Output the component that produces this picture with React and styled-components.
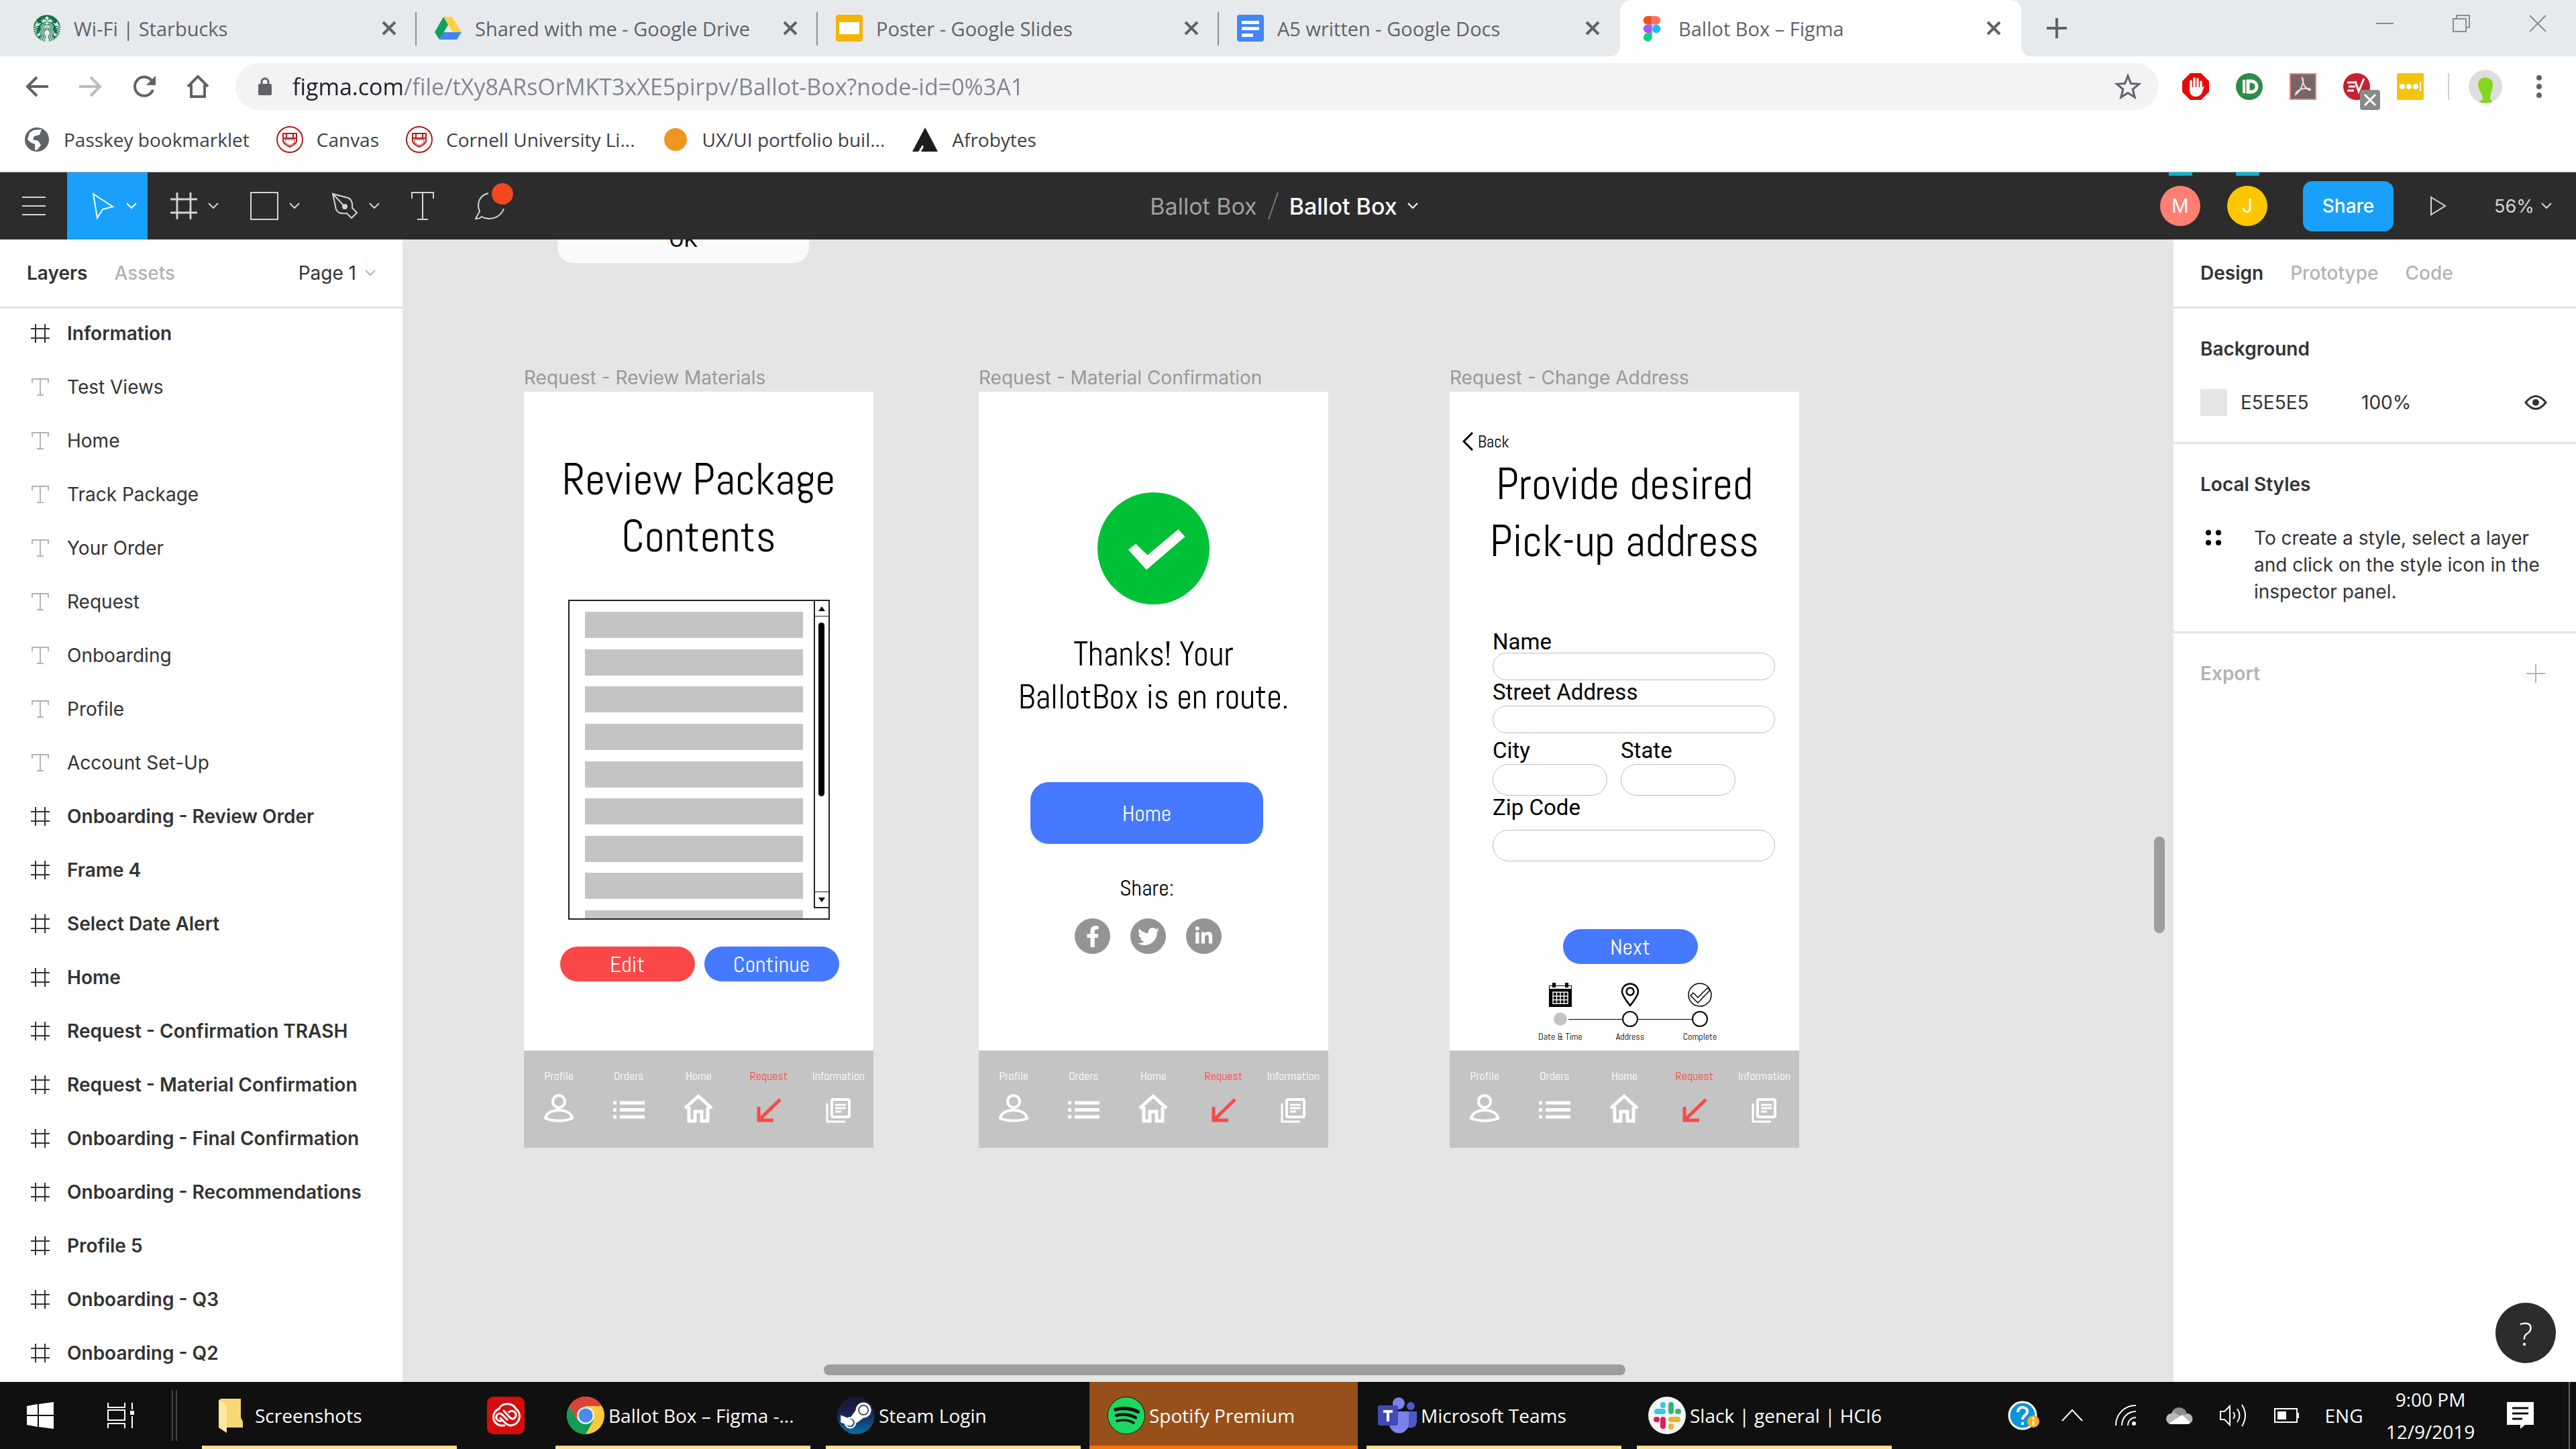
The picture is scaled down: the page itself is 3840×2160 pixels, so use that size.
import React from "react";
import styled, { createGlobalStyle, css } from "styled-components";
import { FaFacebookF, FaTwitter, FaLinkedinIn, FaSteamSymbol, FaSpotify } from "react-icons/fa";
import { SiStarbucks } from "react-icons/si";

const chromeFont = `"Segoe UI", "Open Sans", "Noto Sans", sans-serif`;
const figmaFont = `Inter, "Liberation Sans", sans-serif`;
const mockFont = `Abel, "Liberation Sans Narrow", Roboto, sans-serif`;

const GlobalStyle = createGlobalStyle`
  *, *::before, *::after { box-sizing: border-box; }
  body { margin: 0; font-family: ${figmaFont}; background: #fff; }
  button, input { font: inherit; color: inherit; border: 0; padding: 0; margin: 0; background: none; }
  button { cursor: pointer; }
  ul { list-style: none; margin: 0; padding: 0; }
  h1, h2, h3, p { margin: 0; font-weight: inherit; font-size: inherit; }
  a { color: inherit; text-decoration: none; }
  svg { display: block; flex: none; }
`;

const Page = styled.div`
  display: flex;
  flex-direction: column;
  height: 100vh;
  overflow: hidden;
`;

/* ---------- icons ---------- */

function Icon({ w = 40, h = w, box, children, color = "currentColor", sw = 3 }) {
  return (
    <svg width={w} height={h} viewBox={box || `0 0 ${w} ${h}`} fill="none" stroke={color} strokeWidth={sw} aria-hidden="true">
      {children}
    </svg>
  );
}

const Chevron = ({ color }) => (
  <Icon w={16} h={10} sw={2} color={color}><path d="M1 1l7 7 7-7" /></Icon>
);
const CloseIcon = () => (
  <Icon w={22} sw={4}><path d="M2 2l18 18M20 2L2 20" /></Icon>
);
const HashIcon = ({ size = 28, sw = 2 }) => (
  <Icon w={size} box="0 0 28 28" sw={sw}><path d="M7 0v28M21 0v28M0 7h28M0 21h28" /></Icon>
);
const TextIcon = ({ w = 26, sw = 2 }) => (
  <Icon w={w} box="0 0 26 26" sw={sw}><path d="M1 7V1h24v6M13 1v24M8 25h10" /></Icon>
);

const StarbucksIcon = () => <SiStarbucks size={40} color="#0c7548" />;
const DriveIcon = () => (
  <Icon w={40} sw={0}>
    <path d="M13 3h13l14 23H27z" fill="#ffcf40" />
    <path d="M13 3l7 12L7 37 0 26z" fill="#11a05d" />
    <path d="M13 26h27l-7 11H7z" fill="#4285f4" />
  </Icon>
);
const SlidesIcon = () => (
  <Icon w={40} sw={0}>
    <rect width="40" height="40" rx="4" fill="#f5b400" />
    <rect x="5" y="11" width="30" height="18" fill="#fff" />
  </Icon>
);
const DocsIcon = () => (
  <Icon w={40} sw={0}>
    <rect width="40" height="40" rx="4" fill="#4285f4" />
    <path d="M7 9h26v5H7zM7 18h26v5H7zM7 28h17v5H7z" fill="#fff" />
  </Icon>
);
const FigmaIcon = () => (
  <Icon w={40} sw={0}>
    <path d="M14 2a6 6 0 0 0 0 12.600h6.500V2z" fill="#f24e1e" />
    <path d="M20.500 2v12.600H27A6 6 0 0 0 27 2z" fill="#ff7262" />
    <path d="M14 14.600a6 6 0 0 0 0 12.600h6.500V14.600z" fill="#a259ff" />
    <circle cx="27" cy="20.900" r="6.300" fill="#1abcfe" />
    <path d="M14 27.200a6.300 6.300 0 1 0 6.500 6.300v-6.300z" fill="#0acf83" />
  </Icon>
);

const BackIcon = () => <Icon w={40} sw={4}><path d="M37 20H7M20 6L6 20l14 14" /></Icon>;
const ForwardIcon = () => <Icon w={40} sw={4}><path d="M3 20h30M20 6l14 14-14 14" /></Icon>;
const ReloadIcon = () => (
  <Icon w={40} sw={4}><path d="M33 25a14 14 0 1 1-3-15l4 4" /><path d="M37 4v14H23z" fill="currentColor" stroke="none" /></Icon>
);
const HomeIcon = () => <Icon w={40} sw={4}><path d="M5 20L20 5l15 15M10 17v18h20V17" /></Icon>;
const LockIcon = () => (
  <Icon w={20} h={28}><rect y="10" width="20" height="17" rx="2" fill="currentColor" stroke="none" /><path d="M5 11V7a5 5 0 0 1 10 0v4" /></Icon>
);
const StarIcon = () => (
  <Icon w={40} sw={3}><path d="M20 4l4.500 11.500 12 .8-9.300 7.700 3 12L20 29.500 9.800 36l3-12-9.300-7.700 12-.8z" /></Icon>
);
const BlockIcon = () => (
  <Icon w={40} sw={4} color="#fff">
    <path d="M12 0h16l12 12v16L28 40H12L0 28V12z" fill="#e60b0b" stroke="none" />
    <path d="M13 24V12M18 22V8M23 22V9M28 24V13" strokeLinecap="round" strokeWidth="3.500" />
    <path d="M11 21h19l3-2-4 11q-3 5-9 5-8 0-9-9z" fill="#fff" stroke="none" />
  </Icon>
);
const PushIcon = () => (
  <Icon w={40} sw={3} color="#fff">
    <circle cx="20" cy="20" r="20" fill="#2c8c45" stroke="none" />
    <path d="M12 10v20" strokeWidth="4" /><path d="M18 12h5a8 8 0 0 1 0 16h-5z" strokeWidth="5" />
  </Icon>
);
const AcrobatIcon = () => (
  <Icon w={40} color="#e8dcdc">
    <rect x="1" y="1" width="38" height="38" fill="#75666a" stroke="#ee8377" strokeWidth="2" />
    <path d="M19 7c4 5-2 19-10 25 0-6 14-12 22-8 2 4-11 0-12-17z" strokeWidth="2" />
  </Icon>
);
const EvIcon = () => (
  <Icon w={60} h={60} sw={3} color="#fff">
    <circle cx="20" cy="22" r="20" fill="#c8202f" stroke="none" />
    <path d="M6 16h12M8 22h10M6 28h10M18 14l5 15 8-19" />
    <rect x="25" y="27" width="30" height="30" rx="4" fill="#8a8a8a" stroke="none" />
    <path d="M32 34l16 16M48 34L32 50" />
  </Icon>
);
const DotsIcon = () => (
  <Icon w={40} sw={0}>
    <rect width="40" height="40" rx="3" fill="#f2c40e" />
    <circle cx="8" cy="20" r="4" fill="#fff" /><circle cx="18" cy="20" r="4" fill="#fff" /><circle cx="28" cy="20" r="4" fill="#fff" />
    <path d="M34 13h2v14h-2z" fill="#fff" />
  </Icon>
);
const ProfileIcon = () => (
  <Icon w={50} sw={0}>
    <circle cx="25" cy="25" r="25" fill="#dedede" />
    <path d="M14 22C14 8 36 8 36 22c0 9-4 13-4 20l3 6q-10 4-20 0l6-4c1-8-7-12-7-22z" fill="#84d61f" />
  </Icon>
);
const MoreIcon = () => (
  <Icon w={40} sw={0}><circle cx="20" cy="7" r="4" fill="currentColor" /><circle cx="20" cy="20" r="4" fill="currentColor" /><circle cx="20" cy="33" r="4" fill="currentColor" /></Icon>
);

const GlobeIcon = () => (
  <Icon w={40} sw={0}>
    <circle cx="20" cy="20" r="18" fill="#5f6368" />
    <path d="M15 6l12-1-3 8-8 2-2 5 8 2 4 6-5 7-4 1v-9l-7-3-4-4 3-10z" fill="#fff" />
  </Icon>
);
const CrestIcon = () => (
  <Icon w={40} color="#b31b1b" sw={2}>
    <circle cx="20" cy="20" r="19" /><path d="M10 11h20v12q-2 5-10 8-8-3-10-8zM10 18h20M15 11v7M25 11v7" />
    <path d="M13 20h14v5l-7 4-7-4z" strokeWidth="1" />
  </Icon>
);
const OrangeIcon = () => <Icon w={40} sw={0}><circle cx="20" cy="20" r="17" fill="#f0961e" /></Icon>;
const TriangleIcon = () => (
  <Icon w={40} sw={0}><path d="M20 2l19 36H1z" fill="#1d1d1b" /><path d="M10 38l6-10 2 3-4 7z" fill="#eee" /></Icon>
);

/* ---------- browser chrome ---------- */

const TabStrip = styled.div`
  display: flex;
  align-items: stretch;
  height: 84px;
  flex: none;
  padding-left: 23px;
  background: #e7eaed;
  color: #5f6368;
  font: 29px ${chromeFont};
`;
const Tab = styled.div`
  position: relative;
  display: flex;
  align-items: center;
  gap: 20px;
  flex: 0 1 598px;
  min-width: 0;
  padding: 0 30px 0 27px;
  a { flex: 1; display: flex; align-items: center; gap: 20px; white-space: nowrap; overflow: hidden; }
  &::after {
    content: "";
    position: absolute;
    right: 0;
    top: 18px;
    height: 50px;
    width: 2px;
    background: ${(p) => (p.$divider ? "#8c9094" : "transparent")};
  }
  ${(p) => p.$active && css`
    background: #fff;
    border-radius: 16px 16px 0 0;
    &::before, &::after {
      content: "";
      position: absolute;
      top: auto;
      bottom: 0;
      width: 16px;
      height: 16px;
    }
    &::before { left: -16px; background: radial-gradient(circle at 0 0, transparent 16px, #fff 17px); }
    &::after { right: -16px; background: radial-gradient(circle at 100% 0, transparent 16px, #fff 17px); }
  `}
`;
const NewTab = styled.button`
  width: 70px;
  margin-left: 18px;
  display: grid;
  place-items: center;
`;
const WindowControls = styled.div`
  display: flex;
  margin-left: auto;
  height: 70px;
  color: #8a8d90;
  button { width: 114px; display: grid; place-items: center; }
`;
const ToolRow = styled.div`
  display: flex;
  align-items: center;
  flex: none;
  height: 90px;
  padding: 0 35px;
  background: #fff;
  color: #5f6368;
`;
const NavButtons = styled.div`
  display: flex;
  gap: 40px;
  button:nth-child(2) { color: #babcbe; }
`;
const AddressBar = styled.form`
  flex: 1;
  display: flex;
  align-items: center;
  gap: 31px;
  height: 70px;
  margin: 0 35px 0 36px;
  padding: 0 26px 0 34px;
  border-radius: 35px;
  background: #f1f3f4;
`;
const Url = styled.input`
  flex: 1;
  height: 60px;
  outline: 0;
  font: 34px ${chromeFont};
  color: transparent;
  background: linear-gradient(90deg, #202124 163px, #80868b 163px);
  background-clip: text;
`;
const Extensions = styled.div`
  display: flex;
  align-items: center;
  gap: 40px;
  button { width: 40px; height: 40px; display: grid; align-items: start; overflow: visible; }
  button:nth-child(4) svg { margin-top: -2px; }
`;
const ToolDivider = styled.span`
  width: 2px;
  height: 40px;
  margin: 0 29px 0 36px;
  background: #d0d2d4;
`;
const MoreButton = styled.button`margin-left: 35px;`;
const Bookmarks = styled.nav`
  display: flex;
  align-items: center;
  gap: 40px;
  flex: none;
  height: 83px;
  padding: 0 35px 14px;
  border-bottom: 1px solid #b0b0b0;
  background: #fff;
  color: #3c4043;
  font: 28px ${chromeFont};
  a { display: flex; align-items: center; gap: 20px; }
`;

const tabs = [
  { title: "Wi-Fi | Starbucks", icon: StarbucksIcon, divider: true },
  { title: "Shared with me - Google Drive", icon: DriveIcon, divider: true },
  { title: "Poster - Google Slides", icon: SlidesIcon, divider: true },
  { title: "A5 written - Google Docs", icon: DocsIcon },
  { title: "Ballot Box – Figma", icon: FigmaIcon, active: true },
];
const bookmarks = [
  ["Passkey bookmarklet", GlobeIcon],
  ["Canvas", CrestIcon],
  ["Cornell University Li...", CrestIcon],
  ["UX/UI portfolio buil...", OrangeIcon],
  ["Afrobytes", TriangleIcon],
];
const extensions = [["Ad blocker", BlockIcon], ["Push", PushIcon], ["Acrobat", AcrobatIcon], ["EV", EvIcon], ["Passwords", DotsIcon]];

function Browser() {
  return (
    <>
      <TabStrip>
        {tabs.map(({ title, icon: TabIcon, divider, active }) => (
          <Tab key={title} $divider={divider} $active={active}>
            <a href="#tab"><TabIcon />{title}</a>
            <button aria-label={`Close ${title}`}><CloseIcon /></button>
          </Tab>
        ))}
        <NewTab aria-label="New tab"><Icon w={30} sw={4}><path d="M15 0v30M0 15h30" /></Icon></NewTab>
        <WindowControls>
          <button aria-label="Minimize"><Icon w={26} sw={2}><path d="M0 13h26" /></Icon></button>
          <button aria-label="Restore"><Icon w={26} sw={2}><path d="M1 6h19v19H1zM6 6V1h19v18h-5" /></Icon></button>
          <button aria-label="Close window"><Icon w={26} sw={2}><path d="M1 1l24 24M25 1L1 25" /></Icon></button>
        </WindowControls>
      </TabStrip>
      <ToolRow>
        <NavButtons>
          <button aria-label="Back"><BackIcon /></button>
          <button aria-label="Forward"><ForwardIcon /></button>
          <button aria-label="Reload"><ReloadIcon /></button>
          <button aria-label="Home"><HomeIcon /></button>
        </NavButtons>
        <AddressBar>
          <LockIcon />
          <Url aria-label="Address" defaultValue="figma.com/file/tXy8ARsOrMKT3xXE5pirpv/Ballot-Box?node-id=0%3A1" />
          <button type="button" aria-label="Bookmark this page"><StarIcon /></button>
        </AddressBar>
        <Extensions>
          {extensions.map(([name, ExtIcon]) => <button key={name} aria-label={name}><ExtIcon /></button>)}
        </Extensions>
        <ToolDivider />
        <button aria-label="Profile"><ProfileIcon /></button>
        <MoreButton aria-label="More"><MoreIcon /></MoreButton>
      </ToolRow>
      <Bookmarks>
        {bookmarks.map(([name, MarkIcon]) => <a key={name} href="#bookmark"><MarkIcon />{name}</a>)}
      </Bookmarks>
    </>
  );
}

/* ---------- figma toolbar ---------- */

const FigmaBar = styled.header`
  display: grid;
  grid-template-columns: 1fr auto 1fr;
  flex: none;
  height: 100px;
  background: #2c2c2c;
  color: #d5d5d5;
`;
const Tools = styled.div`display: flex;`;
const Tool = styled.button`
  position: relative;
  width: ${(p) => (p.$single ? 100 : 120)}px;
  padding-left: ${(p) => (p.$single ? 0 : 20)}px;
  display: flex;
  align-items: center;
  justify-content: center;
  gap: 16px;
  background: ${(p) => (p.$active ? "#18a0fb" : "none")};
  color: ${(p) => (p.$active ? "#fff" : "inherit")};
`;
const Notice = styled.span`
  position: absolute;
  left: 53px;
  top: 16px;
  width: 32px;
  height: 32px;
  border-radius: 50%;
  background: #f24822;
`;
const FileTitle = styled.div`
  display: flex;
  align-items: center;
  gap: 16px;
  padding-right: 12px;
  font-size: 34px;
  a { color: #a0a0a0; }
  button { display: flex; align-items: center; gap: 15px; color: #fff; font-weight: 500; }
`;
const Session = styled.div`
  display: flex;
  align-items: center;
  justify-content: flex-end;
  padding-right: 36px;
  font-size: 28px;
`;
const Avatar = styled.button`
  position: relative;
  width: 60px;
  height: 60px;
  margin-right: 40px;
  border-radius: 50%;
  background: ${(p) => p.$color};
  color: #fff;
  &::before {
    content: "";
    position: absolute;
    left: 13px;
    top: -20px;
    width: 35px;
    height: 5px;
    background: #00b5ce;
  }
`;
const ShareButton = styled.button`
  width: 135px;
  height: 75px;
  margin: 0 54px 0 13px;
  border-radius: 14px;
  background: #18a0fb;
  color: #fff;
  font-weight: 500;
`;
const Zoom = styled.button`
  display: flex;
  align-items: center;
  justify-content: space-between;
  width: 86px;
  margin-left: 71px;
  font-size: 27px;
`;

function FigmaToolbar() {
  return (
    <FigmaBar>
      <Tools>
        <Tool $single aria-label="Menu"><Icon w={35} h={28} sw={2}><path d="M0 1h35M0 14h35M0 27h35" /></Icon></Tool>
        <Tool $active aria-label="Move"><Icon w={36} h={40} sw={2}><path d="M3 2l29 19-15 4-8 13z" /></Icon><Chevron /></Tool>
        <Tool aria-label="Frame"><HashIcon size={40} sw={2} /><Chevron /></Tool>
        <Tool aria-label="Rectangle"><Icon w={42} h={42} sw={2}><rect x="1" y="1" width="40" height="40" /></Icon><Chevron /></Tool>
        <Tool aria-label="Pen">
          <Icon w={40} sw={2}>
            <path d="M2 2l5 23c2 5 6 7 16 6l7 7 8-8-7-7c1-9-1-13-6-15z" /><path d="M3 3l16 17" /><circle cx="20" cy="21" r="3" fill="currentColor" />
          </Icon>
          <Chevron />
        </Tool>
        <Tool $single aria-label="Text"><Icon w={34} h={42} sw={2}><path d="M1 10V1h32v9M17 1v40M9 41h16" /></Icon></Tool>
        <Tool $single aria-label="Comments">
          <Icon w={46} h={40} sw={2}><path d="M21 1C8 4 3 16 8 28L2 39q7 0 9-3c10 6 28 3 33-12" /></Icon>
          <Notice />
        </Tool>
      </Tools>
      <FileTitle>
        <a href="#project">Ballot Box</a>
        <Icon w={16} h={40} sw={2} color="#777"><path d="M15 0L1 40" /></Icon>
        <button>Ballot Box<Chevron /></button>
      </FileTitle>
      <Session>
        <Avatar $color="#ff7f73">M</Avatar>
        <Avatar $color="#ffc700">J</Avatar>
        <ShareButton>Share</ShareButton>
        <button aria-label="Present"><Icon w={25} h={30} sw={2}><path d="M2 2l21 13L2 28z" /></Icon></button>
        <Zoom>56%<Chevron /></Zoom>
      </Session>
    </FigmaBar>
  );
}

/* ---------- side panels ---------- */

const Workspace = styled.main`
  flex: 1;
  min-height: 0;
  display: grid;
  grid-template-columns: 600px minmax(0, 1fr) 600px;
  font-size: 28px;
  color: #333;
`;
const Panel = styled.aside`
  position: relative;
  min-height: 0;
  overflow: hidden;
  background: #fff;
`;
const PanelTabs = styled.div`
  position: relative;
  display: flex;
  align-items: center;
  gap: 40px;
  height: 100px;
  padding: 0 40px;
  box-shadow: 0 3px 0 #e5e5e5;
`;
const PanelTab = styled.button`
  font-weight: ${(p) => (p.$active ? 600 : 500)};
  color: ${(p) => (p.$active ? "#333" : "#b3b3b3")};
`;
const PageButton = styled.button`
  display: flex;
  align-items: center;
  gap: 13px;
  margin-left: auto;
`;
const LayerRow = styled.button`
  display: flex;
  align-items: center;
  gap: 26px;
  width: 100%;
  height: 80px;
  padding-left: 46px;
  font-weight: ${(p) => (p.$frame ? 600 : 400)};
  color: #333;
  svg { width: 28px; color: ${(p) => (p.$frame ? "#333" : "#b3b3b3")}; }
`;
const Section = styled.section`
  padding: 20px 40px 19px;
  border-bottom: ${(p) => (p.$last ? "0" : "3px solid #e5e5e5")};
  margin-top: ${(p) => (p.$first ? "3px" : "0")};
`;
const SectionTitle = styled.h2`
  display: flex;
  align-items: center;
  justify-content: space-between;
  height: 80px;
  font-weight: 600;
  color: ${(p) => (p.$muted ? "#b3b3b3" : "#333")};
`;
const FillRow = styled.div`
  display: flex;
  align-items: center;
  height: 80px;
  input { width: 180px; }
  button { margin: 0 2px 0 auto; }
`;
const Swatch = styled.span`
  width: 40px;
  height: 40px;
  margin-right: 20px;
  border-radius: 2px;
  background: #e5e5e5;
`;
const StyleHint = styled.div`
  display: flex;
  gap: 48px;
  padding: 20px 0 20px 8px;
  p { line-height: 40px; }
  svg { margin-top: 8px; }
`;
const HelpButton = styled.button`
  position: absolute;
  right: 30px;
  bottom: 28px;
  width: 90px;
  height: 90px;
  border-radius: 50%;
  background: #2c2c2c;
  color: #fff;
  font: 300 48px ${chromeFont};
`;

const layers = [
  ["Information", true], ["Test Views"], ["Home"], ["Track Package"], ["Your Order"], ["Request"], ["Onboarding"],
  ["Profile"], ["Account Set-Up"], ["Onboarding - Review Order", true], ["Frame 4", true], ["Select Date Alert", true],
  ["Home", true], ["Request - Confirmation TRASH", true], ["Request - Material Confirmation", true],
  ["Onboarding - Final Confirmation", true], ["Onboarding - Recommendations", true], ["Profile 5", true],
  ["Onboarding - Q3", true], ["Onboarding - Q2", true],
];

function LayersPanel() {
  return (
    <Panel>
      <PanelTabs>
        <PanelTab $active>Layers</PanelTab>
        <PanelTab>Assets</PanelTab>
        <PageButton>Page 1<Chevron color="#b3b3b3" /></PageButton>
      </PanelTabs>
      <ul>
        {layers.map(([name, frame], i) => (
          <li key={i}><LayerRow $frame={frame}>{frame ? <HashIcon /> : <TextIcon />}{name}</LayerRow></li>
        ))}
      </ul>
    </Panel>
  );
}

function DesignPanel() {
  return (
    <Panel>
      <PanelTabs>
        <PanelTab $active>Design</PanelTab>
        <PanelTab>Prototype</PanelTab>
        <PanelTab>Code</PanelTab>
      </PanelTabs>
      <Section $first>
        <SectionTitle>Background</SectionTitle>
        <FillRow>
          <Swatch />
          <input aria-label="Fill colour" defaultValue="E5E5E5" />
          <input aria-label="Opacity" defaultValue="100%" />
          <button aria-label="Toggle visibility">
            <Icon w={36} h={24}><path d="M3 12q15-19 30 0-15 19-30 0z" sw={2} /><circle cx="18" cy="12" r="5" fill="currentColor" stroke="none" /></Icon>
          </button>
        </FillRow>
      </Section>
      <Section>
        <SectionTitle>Local Styles</SectionTitle>
        <StyleHint>
          <Icon w={24} sw={0}>
            {[4, 19].flatMap((x) => [4, 19].map((y) => <circle key={`${x}-${y}`} cx={x} cy={y} r="4" fill="#000" />))}
          </Icon>
          <p>To create a style, select a layer and click on the style icon in the inspector panel.</p>
        </StyleHint>
      </Section>
      <Section $last>
        <SectionTitle $muted>
          Export
          <button aria-label="Add export"><Icon w={40} sw={2}><path d="M20 6v28M6 20h28" /></Icon></button>
        </SectionTitle>
      </Section>
      <HelpButton aria-label="Help">?</HelpButton>
    </Panel>
  );
}

/* ---------- canvas ---------- */

const Canvas = styled.div`
  position: relative;
  overflow: hidden;
  background: #e5e5e5;
`;
const AlertCard = styled.div`
  position: absolute;
  left: 231px;
  top: -65px;
  width: 375px;
  height: 100px;
  border-radius: 24px;
  background: #fafafa;
  color: #000;
  text-align: center;
  font: 32px/130px Roboto, sans-serif;
`;
const Placed = styled.section`
  position: absolute;
  left: ${(p) => p.$x}px;
  top: 190px;
  width: 521px;
`;
const FrameName = styled.h3`
  height: 37px;
  line-height: 32px;
  font-size: 28px;
  color: #999;
  white-space: nowrap;
`;
const Artboard = styled.div`
  display: flex;
  flex-direction: column;
  align-items: center;
  height: 1127px;
  background: #fff;
  color: #000;
  font-family: ${mockFont};
`;
const MockTitle = styled.h2`
  margin-top: ${(p) => p.$top}px;
  font-size: ${(p) => p.$size || 66}px;
  line-height: ${(p) => p.$line || 85}px;
  text-align: center;
  white-space: pre-line;
`;
const Pill = styled.button`
  width: ${(p) => (p.$large ? 347 : 201)}px;
  height: ${(p) => (p.$large ? 92 : 52)}px;
  border-radius: 27px;
  background: ${(p) => (p.$danger ? "#fa4848" : "#4579ff")};
  color: #fff;
  font-size: 34px;
`;
const ScrollBox = styled.div`
  display: flex;
  justify-content: space-between;
  align-items: flex-start;
  width: 390px;
  height: 477px;
  margin: 52px 0 40px;
  padding-left: 23px;
  border: 2px solid #222;
  overflow: hidden;
`;
const Items = styled.ul`
  display: flex;
  flex-direction: column;
  justify-content: space-between;
  width: 325px;
  height: 484px;
  flex: none;
  margin-top: 16px;
  li { height: 39px; background: #c4c4c4; }
`;
const ScrollTrack = styled.div`
  display: flex;
  flex-direction: column;
  align-items: center;
  width: 22px;
  height: 458px;
  border: solid #222;
  border-width: 0 0 2px 2px;
  button { width: 100%; height: 23px; display: grid; place-items: center; }
  button:first-child { border-bottom: 1px solid #222; }
  button:last-child { border-top: 1px solid #222; margin-top: auto; }
`;
const Thumb = styled.span`
  width: 9px;
  height: 259px;
  margin-top: 9px;
  border-radius: 5px;
  background: #000;
`;
const PillRow = styled.div`display: flex; gap: 14px; padding-left: 2px;`;
const MockNav = styled.nav`
  display: grid;
  grid-template-columns: repeat(5, 1fr);
  width: 100%;
  height: 145px;
  margin-top: auto;
  background: #c4c4c4;
`;
const MockNavItem = styled.button`
  display: flex;
  flex-direction: column;
  align-items: center;
  gap: 16px;
  padding-top: 28px;
  min-width: 0;
  font-size: 18px;
  line-height: 20px;
  white-space: nowrap;
  color: ${(p) => (p.$active ? "#fa4848" : "#fff")};
`;

const navItems = [
  ["Profile", <><circle cx="24" cy="12" r="9" /><path d="M4 37c2-16 38-16 40 0-12 5-28 5-40 0z" /></>],
  ["Orders", <path key="o" d="M1 14h5M11 14h37M1 24.500h5M11 24.500h37M1 35h5M11 35h37" strokeWidth="5" />],
  ["Home", <path key="h" d="M4 22L24 4l20 18M10 20v21h9V27h10v14h9V20" strokeWidth="5" />],
  ["Request", <path key="r" d="M41 9L10 39M9 20v20h22" strokeWidth="5" />, true],
  ["Information", <><rect x="14" y="9" width="26" height="26" rx="2" /><path d="M7 15v27h27M19 17h16M19 22h16M19 27h9" strokeWidth="3" /></>],
];

function BottomNav() {
  return (
    <MockNav>
      {navItems.map(([name, drawing, active]) => (
        <MockNavItem key={name} $active={active}>
          {name}
          <Icon w={48} h={44} sw={4}>{drawing}</Icon>
        </MockNavItem>
      ))}
    </MockNav>
  );
}

const ShareBlock = styled.div`
  display: flex;
  flex-direction: column;
  align-items: center;
  padding-right: 20px;
  margin-top: 95px;
  font-size: 34px;
  p { margin: 46px 0 25px; line-height: 40px; }
`;
const Socials = styled.div`
  display: flex;
  gap: 30px;
  margin-left: 4px;
  a { width: 53px; height: 53px; border-radius: 50%; display: grid; place-items: center; background: #949494; color: #fff; }
`;
const BackLink = styled.button`
  display: flex;
  align-items: center;
  align-self: flex-start;
  gap: 7px;
  height: 28px;
  margin: 60px 0 0 19px;
  font-size: 25px;
`;
const AddressForm = styled.form`
  display: grid;
  grid-template-columns: 171px 171px;
  column-gap: 20px;
  width: 421px;
  margin: 92px 0 101px 28px;
  font: 33px/32px Roboto, sans-serif;
`;
const Field = styled.label`
  display: flex;
  flex-direction: column;
  grid-column: ${(p) => (p.$half ? "auto" : "1 / -1")};
  gap: ${(p) => p.$gap || 0}px;
  padding-top: ${(p) => p.$top || 0}px;
  width: ${(p) => (p.$half ? "171px" : "421px")};
  input {
    width: 100%;
    height: ${(p) => (p.$tall ? 47 : 41)}px;
    padding: 0 20px;
    border: 1px solid #bdbdbd;
    border-radius: 24px;
  }
`;
const Steps = styled.div`
  display: flex;
  flex-direction: column;
  align-items: center;
  padding-left: 17px;
`;
const StepRow = styled.div`
  display: grid;
  grid-template-columns: repeat(3, 104px);
  justify-items: center;
  margin-top: ${(p) => p.$top}px;
  font-size: 14px;
  line-height: 16px;
`;
const StepTrack = styled.div`
  display: flex;
  align-items: center;
  height: 26px;
  margin-top: 5px;
`;
const Dot = styled.span`
  width: 24px;
  height: 24px;
  border-radius: 50%;
  border: 2px solid ${(p) => (p.$done ? "#fff" : "#000")};
  background: ${(p) => (p.$done ? "#c4c4c4" : "#fff")};
  background-clip: padding-box;
`;
const Line = styled.span`width: 80px; height: 1px; background: #000;`;
const HorizontalBar = styled.div`
  position: absolute;
  left: 628px;
  right: 817px;
  bottom: 10px;
  height: 16px;
  border-radius: 8px;
  background: #9d9d9d;
`;
const VerticalBar = styled.div`
  position: absolute;
  right: 13px;
  top: 890px;
  width: 16px;
  height: 144px;
  border-radius: 8px;
  background: #9d9d9d;
`;

function CanvasArea() {
  return (
    <Canvas>
      <AlertCard>OK</AlertCard>

      <Placed $x={181}>
        <FrameName>Request - Review Materials</FrameName>
        <Artboard>
          <MockTitle $top={88}>{"Review Package\nContents"}</MockTitle>
          <ScrollBox>
            <Items>{Array.from({ length: 9 }, (_, i) => <li key={i} />)}</Items>
            <ScrollTrack>
              <button aria-label="Scroll up"><Icon w={10} h={7} sw={0}><path d="M0 7l5-7 5 7z" fill="#000" /></Icon></button>
              <Thumb />
              <button aria-label="Scroll down"><Icon w={10} h={7} sw={0}><path d="M0 0l5 7 5-7z" fill="#000" /></Icon></button>
            </ScrollTrack>
          </ScrollBox>
          <PillRow><Pill $danger>Edit</Pill><Pill>Continue</Pill></PillRow>
          <BottomNav />
        </Artboard>
      </Placed>

      <Placed $x={859}>
        <FrameName>Request - Material Confirmation</FrameName>
        <Artboard>
          <MockTitle as="div" $top={150}>
            <Icon w={167} sw={0}>
              <circle cx="83.500" cy="83.500" r="83.500" fill="#00c136" />
              <path d="M46 85.500l11-9 17.500 17 46-38.500 10 11L73 115.500z" fill="#fff9f9" />
            </Icon>
          </MockTitle>
          <MockTitle $top={42} $size={50} $line={64}>{"Thanks! Your\nBallotBox is en route."}</MockTitle>
          <ShareBlock>
            <Pill $large>Home</Pill>
            <p>Share:</p>
            <Socials>
              <a href="#facebook" aria-label="Facebook"><FaFacebookF size={32} /></a>
              <a href="#twitter" aria-label="Twitter"><FaTwitter size={32} /></a>
              <a href="#linkedin" aria-label="LinkedIn"><FaLinkedinIn size={29} /></a>
            </Socials>
          </ShareBlock>
          <BottomNav />
        </Artboard>
      </Placed>

      <Placed $x={1561}>
        <FrameName>Request - Change Address</FrameName>
        <Artboard>
          <BackLink><Icon w={16} h={28} sw={3}><path d="M15 1L2 14l13 13" /></Icon>Back</BackLink>
          <MockTitle $top={7}>{"Provide desired\nPick-up address"}</MockTitle>
          <AddressForm>
            <Field>Name<input /></Field>
            <Field $top={2} $gap={4}>Street Address<input /></Field>
            <Field $half $tall $top={10} $gap={4}>City<input /></Field>
            <Field $half $tall $top={10} $gap={4}>State<input /></Field>
            <Field $tall $top={2} $gap={17}>Zip Code<input /></Field>
          </AddressForm>
          <Steps>
            <Pill>Next</Pill>
            <StepRow $top={28}>
              <Icon w={36} sw={0}>
                <path d="M1 4h34v32H1z" fill="#000" /><path d="M2 5h32v4H2z" fill="#fff" />
                <path d="M6 0h5v7H6zM25 0h5v7h-5z" fill="#000" />
                <path d="M7 14h22v17H7zM7 20h22M7 25.500h22M12.500 14v17M18 14v17M23.500 14v17" stroke="#fff" strokeWidth="1.500" />
              </Icon>
              <Icon w={28} h={36} sw={2.500}><path d="M14 34C6 24 2 18 2 13a12 11.500 0 0 1 24 0c0 5-4 11-12 21z" /><circle cx="14" cy="13" r="5.500" /></Icon>
              <Icon w={36} sw={1.500}><circle cx="18" cy="18" r="17" /><path d="M4 19l4-4 7 7L29 8l4 3-18 19z" /></Icon>
            </StepRow>
            <StepTrack><Dot $done /><Line /><Dot /><Line /><Dot /></StepTrack>
            <StepRow $top={5}><span>Date &amp; Time</span><span>Address</span><span>Complete</span></StepRow>
          </Steps>
          <BottomNav />
        </Artboard>
      </Placed>

      <HorizontalBar />
      <VerticalBar />
    </Canvas>
  );
}

/* ---------- taskbar ---------- */

const Taskbar = styled.footer`
  display: flex;
  flex: none;
  height: 100px;
  background: #101010;
  color: #fff;
  font: 28px ${chromeFont};
`;
const SystemButton = styled.button`
  width: ${(p) => p.$w || 80}px;
  display: grid;
  place-items: center;
`;
const Grip = styled.span`
  width: 8px;
  margin: 12px 27px 12px 16px;
  border: solid #444;
  border-width: 0 2px;
`;
const Apps = styled.div`display: flex; gap: 3px;`;
const TaskButton = styled.button`
  position: relative;
  display: flex;
  align-items: center;
  gap: 6px;
  width: ${(p) => (p.$compact ? 121 : 400)}px;
  padding-left: ${(p) => (p.$compact ? 32 : 27)}px;
  white-space: nowrap;
  background: ${(p) => (p.$alert ? "#97501a" : "none")};
  &::after {
    content: "";
    position: absolute;
    left: ${(p) => (p.$alert ? 0 : 10)}px;
    right: ${(p) => (p.$alert ? 0 : 10)}px;
    bottom: 0;
    height: ${(p) => (p.$compact ? 0 : 5)}px;
    background: ${(p) => (p.$alert ? "#ff7300" : "#ffdf8c")};
  }
`;
const Tray = styled.div`display: flex; margin-left: auto; padding-right: 9px;`;
const Clock = styled.button`
  width: 168px;
  line-height: 48px;
`;
const ShowDesktop = styled.span`width: 2px; margin-left: 22px; background: #666;`;
const Round = styled.span`
  width: 56px;
  height: 56px;
  border-radius: 50%;
  display: grid;
  place-items: center;
  overflow: hidden;
  background: ${(p) => p.$bg};
`;

const FolderIcon = () => (
  <Icon w={56} sw={0}><path d="M10 3h31v28l3 6v9H12z" fill="#f8d775" /><path d="M8 4l12 9v41L8 46z" fill="#ffe9a2" /></Icon>
);
const CloudIcon = () => (
  <Icon w={56} sw={3} color="#fff">
    <rect width="56" height="56" rx="9" fill="#d70c0c" stroke="none" />
    <path d="M27 43H20a13 13 0 0 1-2-25C22 9 37 8 43 18a14 14 0 0 1-7 25q-5 0-9-4l-8-8" />
    <path d="M31 35l-8-8q-5-4-8 0-3 5 1 8 4 3 8-1M24 20l10 11q5 4 8 0 3-6-2-9-5-2-8 2" />
  </Icon>
);
const ChromeIcon = () => (
  <Icon w={56} sw={0}>
    <circle cx="28" cy="28" r="28" fill="#fbc93e" />
    <path d="M28 28L3.700 14A28 28 0 0 1 52.300 14H28z" fill="#db4437" /><path d="M28 14h24.300A28 28 0 0 0 3.700 14L16 35z" fill="#db4437" />
    <path d="M3.700 14A28 28 0 0 0 28 56l12-21-24 0z" fill="#119c58" />
    <circle cx="28" cy="28" r="13" fill="#f1f1f1" /><circle cx="28" cy="28" r="10.500" fill="#4a8af4" />
  </Icon>
);
const TeamsIcon = () => (
  <Icon w={58} h={56} sw={0}>
    <circle cx="49" cy="14" r="6" fill="#5059c9" /><circle cx="31" cy="10" r="9" fill="#7b83eb" />
    <path d="M44 22h14v16a9 9 0 0 1-14 7z" fill="#5059c9" /><path d="M17 22h29v18a14 14 0 0 1-29 0z" fill="#7b83eb" />
    <rect y="13" width="30" height="30" rx="3" fill="#4248b5" />
    <path d="M8 22h14M15 22v15" stroke="#fff" strokeWidth="4" />
  </Icon>
);
const SlackIcon = () => (
  <Icon w={56} sw={8}>
    <circle cx="28" cy="28" r="28" fill="#f5f5f5" stroke="none" />
    <g strokeLinecap="round">
      <path d="M13 22h9M22 12v1" stroke="#36c5f0" /><path d="M34 12v10M44 22h1" stroke="#2eb67d" />
      <path d="M34 34h10M34 44v1" stroke="#ecb22e" /><path d="M22 34v10M12 34h1" stroke="#e01e5a" />
    </g>
  </Icon>
);

const apps = [
  { name: "Screenshots", icon: <FolderIcon /> },
  { name: "", label: "Creative Cloud", icon: <CloudIcon />, compact: true },
  { name: "Ballot Box – Figma -...", icon: <ChromeIcon /> },
  { name: "Steam Login", icon: <Round $bg="linear-gradient(#131a33, #1a1f4a 40%, #0a6ea8)"><FaSteamSymbol size={52} /></Round> },
  { name: "Spotify Premium", icon: <Round $bg="#111"><FaSpotify size={56} color="#1ed760" /></Round>, alert: true },
  { name: "Microsoft Teams", icon: <TeamsIcon /> },
  { name: "Slack | general | HCI6", icon: <SlackIcon /> },
];

function WindowsTaskbar() {
  return (
    <Taskbar>
      <SystemButton $w={120} aria-label="Start">
        <Icon w={40} sw={0}><path d="M0 6l16-3v16H0zM18 3l22-3v19H18zM0 21h16v16L0 34zM18 21h22v19l-22-3z" fill="#fff" /></Icon>
      </SystemButton>
      <SystemButton $w={120} aria-label="Task view">
        <Icon w={40} sw={2}><path d="M1 1v7h25V1M1 39v-7h25v7M1 12h25v15H1zM37 1v10M37 21v18" /><rect x="34" y="13" width="6" height="6" fill="#fff" stroke="none" /></Icon>
      </SystemButton>
      <Grip />
      <Apps>
        {apps.map(({ name, label, icon, compact, alert }) => (
          <TaskButton key={name} aria-label={label} $compact={compact} $alert={alert}>{icon}{name}</TaskButton>
        ))}
      </Apps>
      <Tray>
        <SystemButton $w={64} aria-label="Get help">
          <Icon w={48} h={44} sw={4} color="#fff">
            <circle cx="22" cy="22" r="20" fill="#0b95db" stroke="#fff" strokeWidth="3" />
            <path d="M15 17c0-10 15-9 14 0-1 5-7 5-7 11M22 32v4" /><circle cx="38" cy="31" r="9" fill="#f2b01e" stroke="none" /><path d="M38 25v3M38 30v7" strokeWidth="3" />
          </Icon>
        </SystemButton>
        <SystemButton aria-label="Hidden icons"><Icon w={32} h={20} sw={2}><path d="M1 18L16 2l15 16" /></Icon></SystemButton>
        <SystemButton aria-label="Network">
          <Icon w={32} sw={2}><path d="M1 31C1 14 14 1 31 1M10 31c0-12 9-21 21-21M19 31c0-7 5-12 12-12" /><circle cx="28" cy="28" r="3" fill="#fff" stroke="none" /></Icon>
        </SystemButton>
        <SystemButton aria-label="OneDrive">
          <Icon w={40} h={28} sw={0}><path d="M8 27a8 8 0 0 1 0-16 12 12 0 0 1 23 0 8 8 0 0 1 1 16z" fill="#b8b8b8" /><path d="M9 8a12 12 0 0 1 22 4l-9 3z" fill="#8c8c8c" /><path d="M4 26l20-13 12 12-3 2H8z" fill="#fff" /></Icon>
        </SystemButton>
        <SystemButton aria-label="Volume">
          <Icon w={40} h={38} sw={2}><path d="M1 13h6l8-8v28l-8-8H1zM20 14q4 5 0 10M26 9q7 10 0 20M33 3q10 16 0 32" /></Icon>
        </SystemButton>
        <SystemButton aria-label="Battery">
          <Icon w={38} h={24} sw={2}><rect x="1" y="2" width="33" height="20" /><rect x="5" y="6" width="13" height="12" fill="#fff" stroke="none" /><path d="M36 8v8" /></Icon>
        </SystemButton>
        <SystemButton $w={90}>ENG</SystemButton>
        <Clock>9:00 PM<br />12/9/2019</Clock>
        <SystemButton $w={100} aria-label="Notifications">
          <Icon w={40} sw={3} color="#101010"><path d="M0 0h40v34H27l-7 6v-6H0z" fill="#fff" stroke="none" /><path d="M8 9h24M8 17h24M8 25h15" /></Icon>
        </SystemButton>
        <ShowDesktop />
      </Tray>
    </Taskbar>
  );
}

export default function App() {
  return (
    <Page>
      <GlobalStyle />
      <Browser />
      <FigmaToolbar />
      <Workspace>
        <LayersPanel />
        <CanvasArea />
        <DesignPanel />
      </Workspace>
      <WindowsTaskbar />
    </Page>
  );
}
